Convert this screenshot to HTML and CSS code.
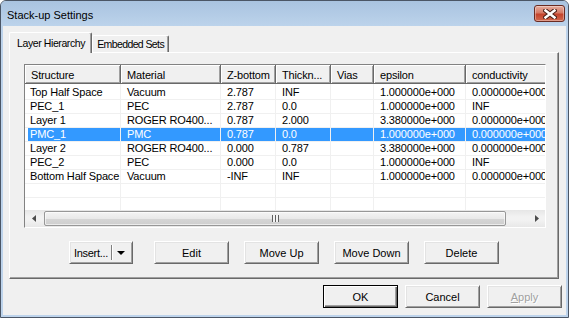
FILE: index.html
```html
<!DOCTYPE html>
<html lang="en">
<head>
  <meta charset="UTF-8">
  <title>Stack-up Settings</title>
  <link rel="stylesheet" href="styles.css">
</head>
<body>
  <div class="window">
    <div class="titlebar">
      <span class="title">Stack-up Settings</span>
      <div class="close">
        <svg width="14" height="10" viewBox="0 0 14 10">
          <path d="M2.5 1.5 L11.5 8.5 M11.5 1.5 L2.5 8.5" stroke="#4a1f17" stroke-width="4.5" stroke-linecap="square"/>
          <path d="M2.5 1.5 L11.5 8.5 M11.5 1.5 L2.5 8.5" stroke="#fff" stroke-width="2.5" stroke-linecap="square"/>
        </svg>
      </div>
    </div>

    <div class="client">
      <div class="tabs">
        <div class="tab active">Layer Hierarchy</div>
        <div class="tab second">Embedded Sets</div>
      </div>

      <div class="panel">
        <div class="list">
          <div class="view">
            <table class="grid">
              <colgroup>
                <col style="width:96px"><col style="width:100px"><col style="width:55px"><col style="width:55px">
                <col style="width:43px"><col style="width:92px"><col style="width:100px">
              </colgroup>
              <thead>
                <tr>
                  <th>Structure</th><th>Material</th><th>Z-bottom</th><th>Thickn...</th>
                  <th>Vias</th><th>epsilon</th><th>conductivity</th>
                </tr>
              </thead>
              <tbody id="rows"></tbody>
            </table>
          </div>
          <div class="hscroll">
            <span class="arrow">
              <svg width="4" height="7" viewBox="0 0 4 7"><path d="M4 0 L0 3.5 L4 7 Z" fill="#4d4d4d"/></svg>
            </span>
            <div class="track">
              <div class="thumb"><span class="grip"></span></div>
            </div>
            <span class="arrow">
              <svg width="4" height="7" viewBox="0 0 4 7"><path d="M0 0 L4 3.5 L0 7 Z" fill="#4d4d4d"/></svg>
            </span>
          </div>
        </div>

        <div class="actions">
          <div class="btn split">
            <span class="split-label">Insert...</span>
            <span class="split-sep"></span>
            <svg width="8" height="4" viewBox="0 0 8 4"><path d="M0 0 L8 0 L4 4 Z" fill="#000"/></svg>
          </div>
          <div class="btn">Edit</div>
          <div class="btn">Move Up</div>
          <div class="btn">Move Down</div>
          <div class="btn">Delete</div>
        </div>
      </div>

      <div class="footer">
        <div class="btn default">OK</div>
        <div class="btn">Cancel</div>
        <div class="btn disabled"><u>A</u>pply</div>
      </div>
    </div>
  </div>

  <script>
    const layers = [
      ['Top Half Space', 'Vacuum', '2.787', 'INF', '', '1.000000e+000', '0.000000e+000'],
      ['PEC_1', 'PEC', '2.787', '0.0', '', '1.000000e+000', 'INF'],
      ['Layer 1', 'ROGER RO400...', '0.787', '2.000', '', '3.380000e+000', '0.000000e+000'],
      ['PMC_1', 'PMC', '0.787', '0.0', '', '1.000000e+000', '0.000000e+000'],
      ['Layer 2', 'ROGER RO400...', '0.000', '0.787', '', '3.380000e+000', '0.000000e+000'],
      ['PEC_2', 'PEC', '0.000', '0.0', '', '1.000000e+000', 'INF'],
      ['Bottom Half Space', 'Vacuum', '-INF', 'INF', '', '1.000000e+000', '0.000000e+000'],
      ['', '', '', '', '', '', ''],
      ['', '', '', '', '', '', '']
    ];
    const selected = 3;

    const tbody = document.getElementById('rows');
    layers.forEach((cells, i) => {
      const row = document.createElement('tr');
      if (i === selected) row.className = 'selected';
      row.innerHTML = cells.map(c => `<td>${c}</td>`).join('');
      tbody.appendChild(row);
    });
  </script>
</body>
</html>
```

FILE: styles.css
```css
* {
  box-sizing: border-box;
}

body {
  margin: 0;
  font-family: 'Liberation Sans', Arial, sans-serif;
  font-size: 11px;
  color: #000;
  background: #fff;
}

.window {
  width: 569px;
  height: 318px;
  border: 1px solid #4b5666;
  border-radius: 6px 6px 0 0;
  background: #bdd3eb;
  display: flex;
  flex-direction: column;
  overflow: hidden;
}

.titlebar {
  height: 25px;
  flex: none;
  display: flex;
  align-items: flex-start;
  padding: 0 3px 0 6px;
  background: linear-gradient(#a9c3e0, #bcd3eb);
}

.title {
  font-size: 11px;
  line-height: 12px;
  margin-top: 8px;
}

.close {
  margin-left: auto;
  margin-top: 4px;
  width: 31px;
  height: 17px;
  border: 1px solid #6a2b22;
  border-radius: 3px;
  background: linear-gradient(#e6ad9f, #d57a66 45%, #c4432c 55%, #d0694f);
  box-shadow: inset 0 0 0 1px rgba(255, 255, 255, 0.35);
  display: flex;
  align-items: center;
  justify-content: center;
}

.client {
  flex: 1;
  margin: 0 2px 2px;
  background: #f0f0f0;
  padding: 6px 0 0 6px;
  display: flex;
  flex-direction: column;
}

/* tabs */

.tabs {
  display: flex;
  align-items: flex-end;
  height: 20px;
  position: relative;
  z-index: 1;
}

.tab {
  height: 17px;
  padding: 2px 5px 0 6px;
  border: 1px solid;
  border-color: #fff #696969 transparent #fff;
  border-bottom: none;
  border-radius: 2px 2px 0 0;
  box-shadow: inset -1px 0 #a0a0a0;
  background: #f0f0f0;
  font-size: 10.5px;
  letter-spacing: -0.4px;
}

.tab.active {
  height: 21px;
  margin-bottom: -1px;
  padding: 4px 6px 0 7px;
}

.tab.second {
  padding: 2px 4px 0 4px;
  letter-spacing: -0.6px;
}

.panel {
  height: 227px;
  margin-right: 7px;
  border: 1px solid;
  border-color: #fff #696969 #696969 #fff;
  box-shadow: inset -1px -1px #a0a0a0;
  padding: 11px 0 0 14px;
}

/* list view */

.list {
  width: 522px;
  height: 164px;
  border: 1px solid;
  border-color: #828282 #fff #fff #828282;
  display: flex;
  flex-direction: column;
}

.view {
  flex: 1;
  overflow: hidden;
  background: #fff;
}

.grid {
  table-layout: fixed;
  width: 541px;
  border-collapse: separate;
  border-spacing: 0;
  letter-spacing: -0.15px;
}

.grid th {
  height: 19px;
  padding: 1px 0 0 6px;
  text-align: left;
  font-weight: normal;
  white-space: nowrap;
  overflow: hidden;
  background: #f0f0f0;
  border-right: 1px solid #696969;
  border-bottom: 1px solid #696969;
  box-shadow: inset 1px 1px #fff, inset -1px -1px #a0a0a0;
}

.grid td {
  height: 14px;
  padding: 0 0 0 6px;
  white-space: nowrap;
  overflow: hidden;
  line-height: 13px;
  border-right: 1px solid #f0f0f0;
  border-bottom: 1px solid #f0f0f0;
}

.grid td:first-child {
  padding-left: 5px;
}

.grid tbody tr:first-child td {
  height: 16px;
  padding-top: 2px;
}

.grid tr.selected td {
  background: #3399ff;
  color: #fff;
}

.grid tr.selected td:first-child {
  box-shadow: inset 3px 0 #fff;
}

/* horizontal scroll bar */

.hscroll {
  height: 17px;
  flex: none;
  display: flex;
  align-items: center;
  background: linear-gradient(#e6e6e6, #f2f2f2 40%, #f2f2f2 60%, #e8e8e8);
}

.arrow {
  width: 17px;
  height: 17px;
  display: flex;
  align-items: center;
  justify-content: center;
  flex: none;
}

.track {
  flex: 1;
  height: 17px;
  padding: 0 22px 0 2px;
  display: flex;
  align-items: center;
}

.thumb {
  flex: 1;
  height: 15px;
  border: 1px solid #979797;
  border-radius: 2px;
  background: linear-gradient(#f4f4f4, #e9e9e9 50%, #d6d6d6 51%, #cecece);
  box-shadow: inset 0 0 0 1px rgba(255, 255, 255, 0.6);
  display: flex;
  align-items: center;
  justify-content: center;
}

.grip {
  width: 7px;
  height: 7px;
  background: repeating-linear-gradient(90deg, #5f5f5f 0 1px, #f4f4f4 1px 3px);
}

/* buttons */

.btn {
  width: 75px;
  height: 23px;
  display: flex;
  align-items: center;
  justify-content: center;
  background: #f0f0f0;
  border: 1px solid;
  border-color: #fff #696969 #696969 #fff;
  box-shadow: inset 1px 1px #e3e3e3, inset -1px -1px #a0a0a0;
}

.btn.default {
  border-color: #000;
  box-shadow: inset 1px 1px #fff, inset -1px -1px #696969, inset -2px -2px #a0a0a0;
}

.btn.disabled {
  color: #a0a0a0;
  text-shadow: 1px 1px #fff;
}

.actions {
  display: flex;
  gap: 15px;
  margin-top: 13px;
  padding-left: 45px;
}

.actions .btn.split {
  width: 64px;
  margin-right: 6px;
  justify-content: flex-start;
  padding-left: 4px;
  letter-spacing: -0.3px;
}

.split-sep {
  width: 2px;
  height: 15px;
  margin: 0 4px 0 3px;
  border-left: 1px solid #808080;
  border-right: 1px solid #fff;
}

.footer {
  display: flex;
  justify-content: flex-end;
  gap: 7px;
  margin-top: 6px;
  padding-right: 4px;
}
```
